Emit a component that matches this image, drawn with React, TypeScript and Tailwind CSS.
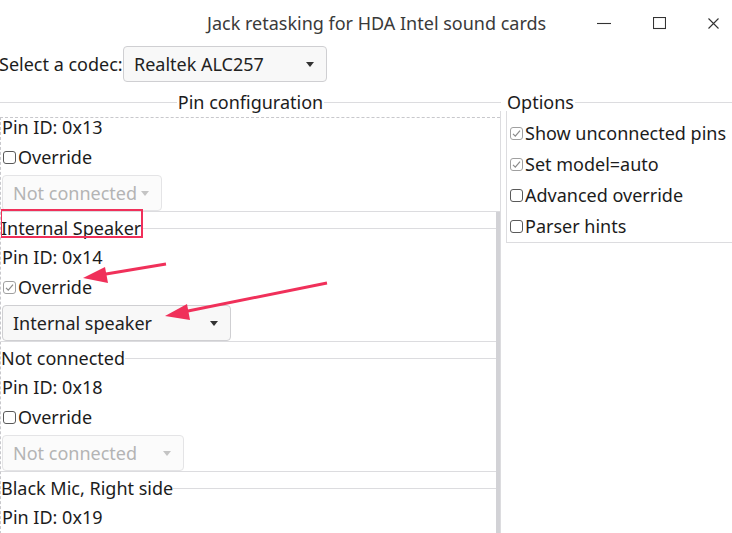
import type { ReactNode } from 'react';

const FONT = "font-['Noto_Sans',sans-serif]";

function Box({ checked, light }: { checked?: boolean; light?: boolean }) {
  return (
    <svg width="13" height="13" viewBox="0 0 13 13" className="shrink-0">
      <rect x="0.5" y="0.5" width="12" height="12" rx="2.5" fill="white" stroke={light ? '#a0a0a0' : '#5a5a5a'} />
      {checked && <path d="M3 6.8 L5.3 9.2 L10 3.6" fill="none" stroke="#8a8a8a" strokeWidth="1.2" />}
    </svg>
  );
}

function Check({ label, checked, h = 'h-[30px]', pl = 'pl-[3px]' }: { label: string; checked?: boolean; h?: string; pl?: string }) {
  return (
    <div className={`${h} ${pl} flex items-center gap-[2px]`}>
      <Box checked={checked} light={checked} />
      <span>{label}</span>
    </div>
  );
}

function Arrow() {
  return (
    <svg width="8" height="5" viewBox="0 0 8 5">
      <path d="M0 0 H8 L4 5 Z" fill="currentColor" />
    </svg>
  );
}

function Combo({ label, width, disabled }: { label: string; width: string; disabled?: boolean }) {
  return (
    <div
      className={`${width} h-[36px] rounded-[4px] border flex items-center justify-between pl-[10px] pr-[12px] ${
        disabled ? 'border-[#e4e4e6] bg-[#fbfbfb] text-[#b4b4b4]' : 'border-[#cfcfd2] bg-[#f8f8f8] text-[#222]'
      }`}
    >
      <span>{label}</span>
      <span className={disabled ? 'text-[#c4c4c4]' : 'text-[#333]'}>
        <Arrow />
      </span>
    </div>
  );
}

function PinGroup({ title, pin, checked, combo, comboWidth, disabled, titleBox }: {
  title?: string; pin: string; checked?: boolean; combo: string; comboWidth: string; disabled?: boolean; titleBox?: boolean;
}) {
  return (
    <div className="border-b border-[#dcdcdf]">
      {title ? (
        <>
          <div className="h-[30px] pt-[2px] flex items-center">
            <span className="relative leading-[28px]">
              {title}
              {titleBox && <span className="absolute -left-px -right-[2px] -top-[5px] h-[29px] border-2 border-[#f0305a]" />}
            </span>
            <div className="flex-1 border-t border-[#dcdcdf]" />
          </div>
          <div className="h-[30px] flex items-center pl-px">Pin ID: {pin}</div>
        </>
      ) : (
        // partly scrolled group: only the tail is visible under the dashed edge
        <div className="h-[24px] pl-px leading-[18px]">Pin ID: {pin}</div>
      )}
      <Check label="Override" checked={checked} pl="pl-[2px]" />
      <div className="pt-[3px] pl-px">
        <Combo label={combo} width={comboWidth} disabled={disabled} />
      </div>
    </div>
  );
}

function Frame({ title, center, children, className }: { title: string; center?: boolean; children: ReactNode; className?: string }) {
  return (
    <div className={`flex flex-col ${className ?? ''}`}>
      <div className="h-[18px] flex items-center">
        {center && <div className="flex-1 border-t border-[#dcdcdf]" />}
        <span className="px-px leading-[18px]">{title}</span>
        <div className="flex-1 border-t border-[#dcdcdf]" />
      </div>
      {children}
    </div>
  );
}

export default function App() {
  return (
    <div className={`w-[732px] h-[533px] bg-white overflow-hidden text-[18px] text-[#1c1c1c] ${FONT}`}>
      <header className="h-[46px] flex items-center text-[#3a3a3a]">
        <div className="pl-[207px] flex-1 pt-[1px]">Jack retasking for HDA Intel sound cards</div>
        <div className="flex items-center gap-[42px] pr-[13px] text-[#333]">
          <svg width="14" height="14" viewBox="0 0 14 14"><path d="M0 7.5 H14" stroke="currentColor" strokeWidth="1.1" /></svg>
          <svg width="13" height="13" viewBox="0 0 13 13"><rect x="0.5" y="0.5" width="12" height="11" fill="none" stroke="currentColor" strokeWidth="1.1" /></svg>
          <svg width="11" height="11" viewBox="0 0 11 11"><path d="M0.5 0.5 L10.5 10.5 M10.5 0.5 L0.5 10.5" stroke="currentColor" strokeWidth="1.1" /></svg>
        </div>
      </header>

      <div className="h-[42px] flex items-center -mt-[3px]">
        <div className="w-[123px] shrink-0 whitespace-nowrap">
          <span className="-ml-px inline-block">Select a codec:</span>
        </div>
        <Combo label="Realtek ALC257" width="w-[204px]" />
      </div>

      <div className="flex mt-[8px] h-[460px]">
        <Frame title="Pin configuration" center className="w-[501px] shrink-0">
          <div className="relative flex-1 border-r border-[#dcdcdf] overflow-hidden">
            <div className="mt-[6px] border-t border-dashed border-[#c8c8cc] overflow-hidden h-full border-l">
              <PinGroup pin="0x13" combo="Not connected" comboWidth="w-[160px]" disabled />
              <PinGroup title="Internal Speaker" titleBox pin="0x14" checked combo="Internal speaker" comboWidth="w-[229px]" />
              <PinGroup title="Not connected" pin="0x18" combo="Not connected" comboWidth="w-[182px]" disabled />
              <PinGroup title="Black Mic, Right side" pin="0x19" combo="Not connected" comboWidth="w-[182px]" disabled />
            </div>
            <div className="absolute right-0 top-[101px] bottom-0 w-[4px] bg-[#d2d2d6]" />
            <svg className="absolute left-0 top-0" width="500" height="440" viewBox="0 111 500 440">
              <g stroke="#f0305a" strokeWidth="3" fill="#f0305a">
                <line x1="166" y1="264" x2="100" y2="275" />
                <path d="M83 278 L105 267 L108 283 Z" stroke="none" />
                <line x1="327" y1="283" x2="183" y2="312" />
                <path d="M165 316 L187 304 L190 320 Z" stroke="none" />
              </g>
            </svg>
          </div>
        </Frame>
        <Frame title="Options" className="flex-1 ml-[5px] self-start">
          <div className="border-l border-b border-[#dcdcdf] pt-[7px]">
            <Check label="Show unconnected pins" checked h="h-[31px]" />
            <Check label="Set model=auto" checked h="h-[31px]" />
            <Check label="Advanced override" h="h-[31px]" />
            <Check label="Parser hints" h="h-[31px]" />
          </div>
        </Frame>
      </div>
    </div>
  );
}
